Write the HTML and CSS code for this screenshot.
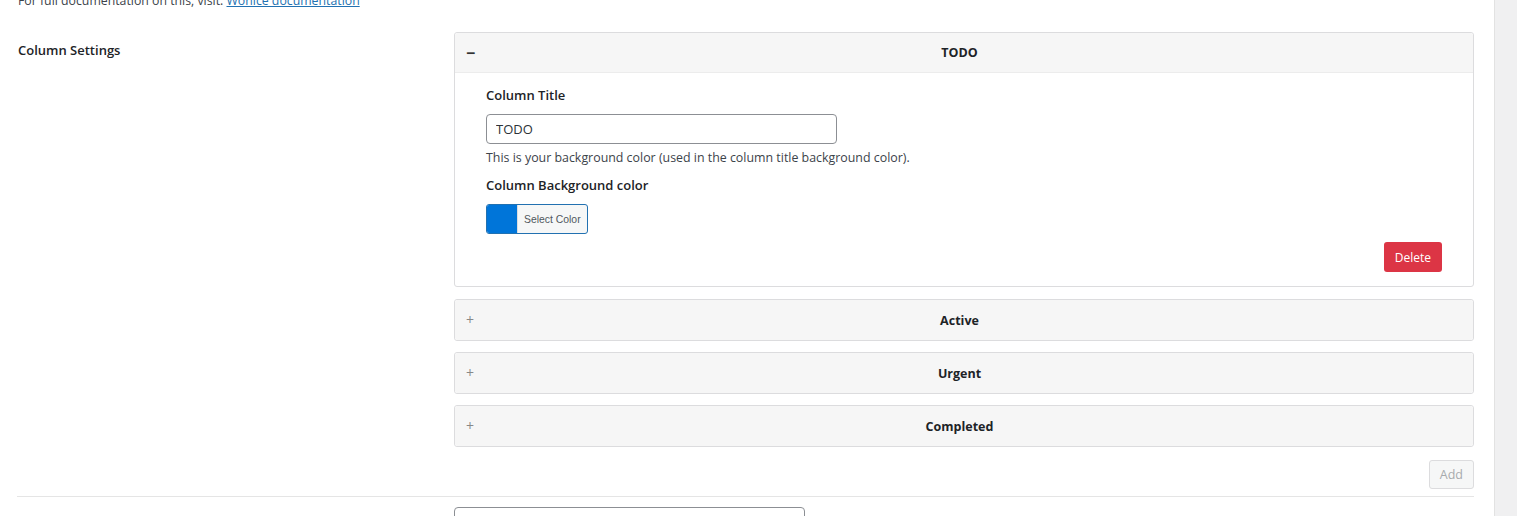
FILE: index.html
```html
<!DOCTYPE html>
<html lang="en">
<head>
    <meta charset="UTF-8">
    <meta name="viewport" content="width=device-width, initial-scale=1.0">
    <title>Board Settings</title>
    <link rel="stylesheet" href="styles.css">
</head>
<body>

    <div class="page">
        <div class="content">
            <p class="intro">For full documentation on this, visit: <a href="#">Wonice documentation</a></p>

            <div class="form-row">
                <div class="form-label">Column Settings</div>
                <div class="form-field">
                    <div class="panel open">
                        <div class="panel-head">
                            <span class="toggle">&minus;</span>
                            <span class="panel-title">TODO</span>
                        </div>
                        <div class="panel-body">
                            <label class="field-label">Column Title</label>
                            <input class="text-input" type="text" value="TODO">
                            <p class="description">This is your background color (used in the column title background color).</p>
                            <label class="field-label">Column Background color</label>
                            <button class="color-btn"><span class="swatch"></span><span class="color-text">Select Color</span></button>
                            <div class="panel-actions">
                                <button class="btn-delete">Delete</button>
                            </div>
                        </div>
                    </div>
                    <div class="panel">
                        <div class="panel-head">
                            <span class="toggle plus">+</span>
                            <span class="panel-title">Active</span>
                        </div>
                    </div>
                    <div class="panel">
                        <div class="panel-head">
                            <span class="toggle plus">+</span>
                            <span class="panel-title">Urgent</span>
                        </div>
                    </div>
                    <div class="panel">
                        <div class="panel-head">
                            <span class="toggle plus">+</span>
                            <span class="panel-title">Completed</span>
                        </div>
                    </div>
                    <div class="add-row">
                        <button class="btn-add" disabled>Add</button>
                    </div>
                </div>
            </div>

            <div class="form-row next">
                <div class="form-label"></div>
                <div class="form-field">
                    <input class="text-input" type="text">
                </div>
            </div>
        </div>
        <div class="gutter"></div>
    </div>

</body>
</html>
```

FILE: styles.css
```css
body {
    margin: 0;
    font-family: "Open Sans", "Noto Sans", sans-serif;
    color: #3c434a;
    background: #f0f0f1;
    height: 516px;
    overflow: hidden;
}
.page {
    display: flex;
    height: 100%;
}
.content {
    flex: 1;
    background: #fff;
    padding: 0 20px 0 17px;
}
.gutter {
    width: 22px;
    background: #f0f0f1;
    border-left: 1px solid #e2e2e2;
}
.intro {
    margin: -9px 0 0 1px;
    font-size: 12.3px;
    line-height: 20px;
}
.intro a {
    color: #2271b1;
}
.form-row {
    display: flex;
    padding-top: 21px;
    padding-bottom: 7px;
    border-bottom: 1px solid #e5e5e5;
}
.form-row.next {
    border-bottom: none;
    padding-top: 10px;
}
.form-label {
    width: 436px;
    padding: 9px 0 0 1px;
    font-size: 13px;
    font-weight: 600;
    color: #1d2327;
}
.form-field {
    flex: 1;
}
.panel {
    border: 1px solid #dcdcde;
    border-radius: 3px;
    margin-bottom: 11px;
    background: #fff;
}
.panel.open {
    margin-bottom: 12px;
}
.panel-head {
    display: flex;
    align-items: center;
    height: 40px;
    padding: 0 30px 0 11px;
    background: #f6f6f6;
    border-radius: 3px;
}
.open .panel-head {
    height: 39px;
    border-bottom: 1px solid #ececec;
    border-radius: 3px 3px 0 0;
}
.toggle {
    width: 10px;
    font-size: 16px;
    font-weight: 700;
    color: #333;
    line-height: 1;
}
.toggle.plus {
    font-size: 14px;
    font-weight: 400;
    color: #888;
}
.panel-title {
    flex: 1;
    text-align: center;
    font-size: 12.5px;
    font-weight: 700;
    color: #1d2327;
}
.panel-body {
    padding: 13px 31px 14px;
}
.field-label {
    display: block;
    font-size: 13px;
    font-weight: 600;
    color: #1d2327;
    margin-bottom: 10px;
}
.text-input {
    box-sizing: border-box;
    width: 351px;
    height: 30px;
    padding: 0 9px;
    border: 1px solid #8c8f94;
    border-radius: 4px;
    font-family: inherit;
    font-size: 13px;
    color: #2c3338;
}
.description {
    margin: 5px 0 10px;
    font-size: 12.4px;
    color: #3c434a;
}
.color-btn {
    display: flex;
    align-items: stretch;
    height: 30px;
    padding: 0;
    border: 1px solid #2271b1;
    border-radius: 3px;
    background: #f6f7f7;
    overflow: hidden;
}
.swatch {
    width: 30px;
    background: #0075d9;
}
.color-text {
    display: flex;
    align-items: center;
    padding: 0 6px;
    font-family: inherit;
    font-size: 10.4px;
    color: #50575e;
    border-left: 1px solid #dcdcde;
}
.panel-actions {
    display: flex;
    justify-content: flex-end;
    margin-top: 8px;
}
.btn-delete {
    height: 30px;
    padding: 0 11px;
    border: none;
    border-radius: 3px;
    background: #dc3545;
    color: #fff;
    font-family: inherit;
    font-size: 12px;
}
.add-row {
    display: flex;
    justify-content: flex-end;
    margin-top: 13px;
}
.btn-add {
    height: 29px;
    padding: 0 10px;
    border: 1px solid #dcdcde;
    border-radius: 3px;
    background: #f6f7f7;
    color: #a7aaad;
    font-family: inherit;
    font-size: 12.5px;
}
```
